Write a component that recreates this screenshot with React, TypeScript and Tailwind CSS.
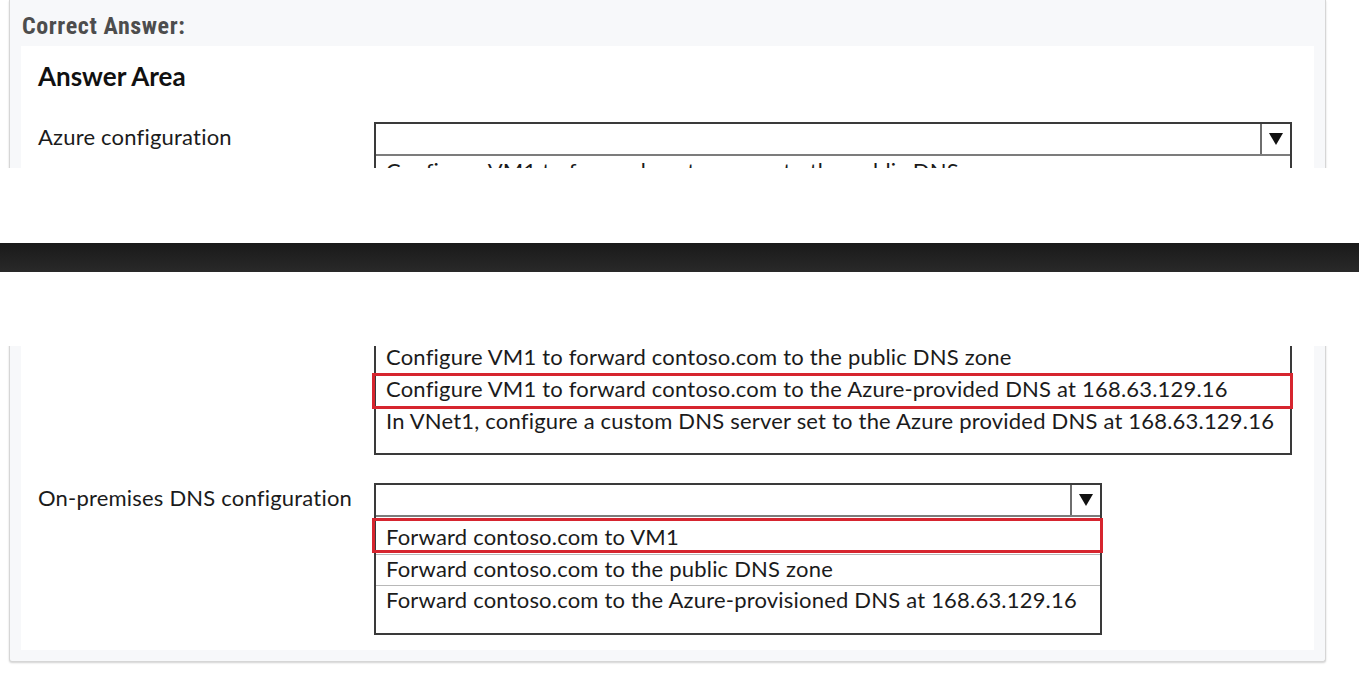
import React from "react";

const azureItems = [
  "Configure VM1 to forward contoso.com to the public DNS zone",
  "Configure VM1 to forward contoso.com to the Azure-provided DNS at 168.63.129.16",
  "In VNet1, configure a custom DNS server set to the Azure provided DNS at 168.63.129.16",
];

const onPremItems = [
  "Forward contoso.com to VM1",
  "Forward contoso.com to the public DNS zone",
  "Forward contoso.com to the Azure-provisioned DNS at 168.63.129.16",
];

function Arrow() {
  return (
    <svg width="14" height="12" viewBox="0 0 14 12">
      <path d="M0 0h14L7 12z" fill="#111" />
    </svg>
  );
}

type DropdownProps = {
  className: string;
  listClass: string;
  boxClass: string;
  items: string[];
  selected: number;
  divided?: boolean;
};

function Dropdown({ className, listClass, boxClass, items, selected, divided }: DropdownProps) {
  return (
    <div className={`border-2 border-[#3a3a3a] bg-white ${className}`}>
      <div className="flex h-[32px] border-b-2 border-[#7c7c7c]">
        <div className="flex-1" />
        <div className="flex w-[30px] items-center justify-center border-l-2 border-[#6e6e6e]">
          <Arrow />
        </div>
      </div>
      <div className={listClass}>
        {items.map((item, i) => (
          <div
            key={item}
            className={`relative whitespace-nowrap pl-[10px] leading-[28px] ${
              divided && i > 0 ? "h-[32px] border-t border-[#b8b8b8]" : "h-[32px]"
            } ${divided && i > 0 ? "-mt-[1px]" : ""}`}
          >
            {item}
            {i === selected && <span className={`absolute border-[3px] border-[#d6252f] ${boxClass}`} />}
          </div>
        ))}
      </div>
    </div>
  );
}

function AnswerCard() {
  return (
    <div className="ml-[9px] w-[1317px] rounded-b-[3px] border border-t-0 border-[#d6d6d6] bg-[#f7f8fa] px-[11px] pb-[11px] shadow-[0_1px_2px_rgba(0,0,0,0.18)]">
      <div className="h-[46px] pt-[11px] pl-[1px] font-['Roboto_Condensed','Liberation_Sans_Narrow',Roboto,sans-serif] text-[24px] font-bold leading-[30px] tracking-[0.6px] text-[#4d4d4d]">
        Correct Answer:
      </div>
      <div className="bg-white pt-[15px] pb-[15px] pl-[17px] font-['Lato','Open_Sans',sans-serif] text-[22px] tracking-[0.2px] text-[#1b1b1b]">
        <div className="text-[26px] font-bold leading-[30px] tracking-normal text-[#111]">Answer Area</div>
        <div className="mt-[31px] flex">
          <div className="w-[336px] leading-[30px]">Azure configuration</div>
          <Dropdown
            className="w-[918px]"
            listClass="pt-[1px] pb-[14px]"
            boxClass="-left-[4px] -right-[3px] -top-[2px] -bottom-[2px]"
            items={azureItems}
            selected={1}
          />
        </div>
        <div className="mt-[28px] flex">
          <div className="w-[336px] leading-[30px]">On-premises DNS configuration</div>
          <Dropdown
            className="w-[728px]"
            listClass="pt-[6px] pb-[16px]"
            boxClass="-left-[4px] -right-[3px] -top-[5px] bottom-[2px]"
            items={onPremItems}
            selected={0}
            divided
          />
        </div>
      </div>
    </div>
  );
}

export default function App() {
  return (
    <div className="h-[687px] w-[1359px] overflow-hidden bg-white">
      <div className="h-[168px] overflow-hidden">
        <AnswerCard />
      </div>
      <div className="h-[75px]" />
      <div className="h-[29px] bg-linear-to-b from-[#1a1a1a] to-[#292929]" />
      <div className="h-[74px]" />
      <div className="h-[341px] overflow-hidden">
        <div className="-mt-[160px]">
          <AnswerCard />
        </div>
      </div>
    </div>
  );
}
